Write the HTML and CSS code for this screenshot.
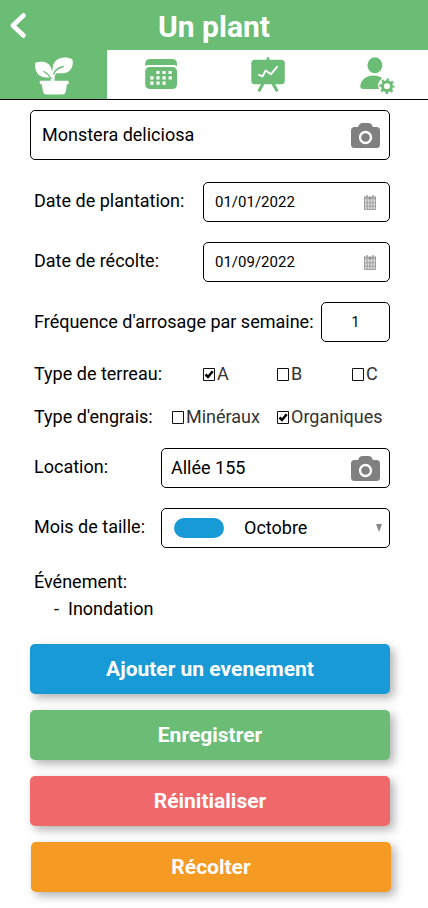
FILE: index.html
```html
<!DOCTYPE html>
<html lang="fr">
<head>
<meta charset="utf-8">
<title>Un plant</title>
<link rel="stylesheet" href="styles.css">
</head>
<body>
<svg class="defs" width="0" height="0">
  <symbol id="camera" viewBox="0 0 30 26">
    <path fill="#808080" d="M4.500 4H8L9.300 1.500Q10.200 0 12.200 0H18.800Q20.800 0 21.700 1.500L23 4H26.500Q30 4 30 7.500V21.500Q30 25 26.500 25H4.500Q1 25 1 21.500V7.500Q1 4 4.500 4Z"/>
    <circle cx="15.500" cy="14.500" r="5.500" fill="none" stroke="#fff" stroke-width="2.300"/>
  </symbol>
  <symbol id="date" viewBox="0 0 14 16">
    <path fill="#8c8c8c" d="M1 2.500H13V5.500H1Z"/>
    <path fill="#ddd" d="M1 5.500H13V15.500H1Z"/>
    <path fill="none" stroke="#999" stroke-width=".9" d="M1.500 4V15.500H12.500V4M4.200 5V15.500M7 5V15.500M9.800 5V15.500M1.500 8.800H12.500M1.500 12.200H12.500"/>
    <path stroke="#fff" stroke-width="2.800" d="M4 1V4.500M10 1V4.500"/>
    <path stroke="#858585" stroke-width="1.500" stroke-linecap="round" d="M4 1.700V4M10 1.700V4"/>
  </symbol>
  <symbol id="box" viewBox="0 0 12 13">
    <path fill="#fff" stroke="#111" d="M.5.5H11.500V12.500H.5Z"/>
  </symbol>
  <symbol id="checked" viewBox="0 0 12 13">
    <path fill="#fff" stroke="#111" d="M.5.5H11.500V12.500H.5Z"/>
    <path fill="none" stroke="#000" stroke-width="2.500" d="M2.500 6.500L5 9L9.700 3.200"/>
  </symbol>
</svg>
<header class="header">
  <svg class="back" width="20" height="30" viewBox="8 10 20 30"><path d="M23.500 15.500L12.800 25.500L23.500 35.500" fill="none" stroke="#fff" stroke-width="4.600" stroke-linecap="round" stroke-linejoin="round"/></svg>
  <h1 class="title">Un plant</h1>
</header>
<nav class="tabs">
  <a class="tab active"><svg width="40" height="40" viewBox="34 56 40 40">
    <path fill="#fff" d="M41 80.700H67.500Q68.700 80.700 68.700 82V83.200Q68.700 84.200 67.500 84.200H67L65.800 91.500Q65.300 94.500 62.300 94.500H46.500Q43.500 94.500 43 91.500L41.800 84.200H41Q39.700 84.200 39.700 83V82Q39.700 80.700 41 80.700Z"/>
    <path fill="#fff" d="M35.300 62.800C42 60.300 48.800 62 51 67.500C51.700 69 51.800 71 51.900 72C53.500 69 51.500 65 56 60.500C60 57 67 56.600 72.500 59.500C74 67 70 72.800 63.500 73.200C60.500 73.400 58 72.700 56.300 73.600C54.500 74.800 54.600 78 54.500 81H50.800C50.800 77.500 50 77.300 47.500 77.500C38.500 78.300 34 71 35.300 62.800Z"/>
    <path fill="none" stroke="#6bbd76" stroke-width="1.400" stroke-linecap="round" d="M44 71.500Q49 74.500 51 78.500M63.300 66.500Q55.500 68.500 53.700 74"/>
  </svg></a>
  <a class="tab"><svg width="34" height="32" viewBox="144 58 34 32">
    <path fill="#6bbd76" d="M145.200 65V64Q145.200 59 150.200 59H172Q177 59 177 64V66Q175.500 64.900 174 64.900H148Q146.500 64.900 145.200 66Z"/>
    <rect x="145.200" y="67" width="31.800" height="22" rx="4.500" fill="#6bbd76"/>
    <path fill="none" stroke="#fff" stroke-width="3.200" stroke-dasharray="3.200 2.900" d="M156.300 72.500H172M150.300 77.800H172M150.300 83.200H166"/>
  </svg></a>
  <a class="tab"><svg width="36" height="38" viewBox="250 56 36 38">
    <rect x="251.300" y="59.800" width="33.500" height="24.500" rx="3.500" fill="#6bbd76"/>
    <path fill="none" stroke="#6bbd76" stroke-width="3" stroke-linecap="round" d="M268 58.500V61M262.800 84L259.300 90.300M273.200 84L276.700 90.300"/>
    <path fill="none" stroke="#fff" stroke-width="1.900" stroke-linecap="round" stroke-linejoin="round" d="M259 74.800L262.500 76.300L265.700 70.500L271 74.200L277 66.800"/>
  </svg></a>
  <a class="tab user"><svg width="36" height="40" viewBox="360 56 36 40">
    <ellipse cx="374.900" cy="65.300" rx="7.500" ry="8" fill="#6bbd76"/>
    <path fill="#6bbd76" d="M363 89Q360.300 89 360.300 86C361 80 366 75.500 373.500 75.500Q379 75.500 382.300 78Q376 83.500 379 89Z"/>
    <circle cx="387" cy="86.200" r="8.200" fill="#fff"/>
    <circle cx="387" cy="86.200" r="6.400" fill="none" stroke="#6bbd76" stroke-width="2.600" stroke-dasharray="2.513 2.513" stroke-dashoffset="1.256"/>
    <circle cx="387" cy="86.200" r="4.500" fill="none" stroke="#6bbd76" stroke-width="2.900"/>
  </svg></a>
</nav>
<main class="form">
  <div class="field name"><span>Monstera deliciosa</span><svg class="camera" width="30" height="26"><use href="#camera"/></svg></div>
  <div class="row">
    <span class="label">Date de plantation:</span>
    <div class="field date"><span>01/01/2022</span><svg width="14" height="16"><use href="#date"/></svg></div>
  </div>
  <div class="row">
    <span class="label">Date de récolte:</span>
    <div class="field date"><span>01/09/2022</span><svg width="14" height="16"><use href="#date"/></svg></div>
  </div>
  <div class="row">
    <span class="label freq">Fréquence d'arrosage par semaine:</span>
    <div class="field count">1</div>
  </div>
  <div class="options soil">
    <span class="label">Type de terreau:</span>
    <span class="option"><svg width="12" height="13"><use href="#checked"/></svg>A</span>
    <span class="option"><svg width="12" height="13"><use href="#box"/></svg>B</span>
    <span class="option"><svg width="12" height="13"><use href="#box"/></svg>C</span>
  </div>
  <div class="options feed">
    <span class="label">Type d'engrais:</span>
    <span class="option"><svg width="12" height="13"><use href="#box"/></svg>Minéraux</span>
    <span class="option"><svg width="12" height="13"><use href="#checked"/></svg>Organiques</span>
  </div>
  <div class="row">
    <span class="label">Location:</span>
    <div class="field wide place"><span>Allée 155</span><svg class="camera" width="30" height="26"><use href="#camera"/></svg></div>
  </div>
  <div class="row">
    <span class="label">Mois de taille:</span>
    <div class="field wide month"><i class="pill"></i><span>Octobre</span><svg class="arrow" width="6" height="8" viewBox="0 0 6 8"><path d="M0 0H6L3 8Z" fill="#888"/></svg></div>
  </div>
  <section class="events">
    <div>Événement:</div>
    <div class="event"><span class="dash">-</span>Inondation</div>
  </section>
  <div class="buttons">
    <button class="button blue">Ajouter un evenement</button>
    <button class="button green">Enregistrer</button>
    <button class="button red">Réinitialiser</button>
    <button class="button orange">Récolter</button>
  </div>
</main>
</body>
</html>
```
FILE: styles.css
```css
* { box-sizing: border-box; }
body {
  margin: 0;
  width: 428px;
  height: 908px;
  overflow: hidden;
  background: #fff;
  color: #000;
  font: 18px/27px Roboto, sans-serif;
}
svg { display: block; flex: none; }
.defs { position: absolute; }
.header {
  display: grid;
  grid-template-columns: 28px 1fr 28px;
  align-items: center;
  height: 50px;
  background: #6bbd76;
  color: #fff;
}
.back { margin-left: 8px; }
.title {
  margin: 3px 0 0;
  font-size: 30px;
  line-height: 36px;
  font-weight: 700;
  text-align: center;
}
.tabs {
  display: grid;
  grid-template-columns: repeat(4, 107px);
  height: 50px;
  border-bottom: 1px solid #000;
}
.tab { display: flex; justify-content: center; padding-top: 6px; }
.tab:nth-child(2) { padding-top: 8px; }
.user { padding-left: 6px; }
.active { background: #6bbd76; }
.form { padding: 10px 38px 0 30px; }
.field {
  display: flex;
  align-items: center;
  justify-content: space-between;
  height: 40px;
  border: 1px solid #000;
  border-radius: 5px;
}
.name { height: 50px; margin-bottom: 22px; padding: 0 9px 0 11px; }
.name span, .place span, .month span { margin-bottom: 1px; }
.camera { margin-top: 2px; }
.row {
  display: flex;
  align-items: center;
  justify-content: space-between;
  height: 40px;
  margin-bottom: 20px;
  padding-left: 4px;
}
.label { white-space: nowrap; margin-top: -3px; }
.freq { margin-top: -1px; }
.date { width: 187px; padding: 0 12px 0 11px; font-size: 15px; }
.count { width: 69px; justify-content: center; font-size: 14px; }
.wide { width: 229px; }
.place { padding: 0 9px; }
.month { justify-content: flex-start; padding: 0 7px 0 12px; }
.pill { width: 50px; height: 20px; margin-right: 20px; border-radius: 10px; background: #189ad6; }
.arrow { margin-left: auto; }
.options { display: grid; align-items: center; height: 27px; padding-left: 4px; }
.options .label { margin: 0; }
.soil { grid-template-columns: 169px 74px 75px 1fr; margin: -2px 0 16px; }
.feed { grid-template-columns: 138px 105px 1fr; margin-bottom: 18px; }
.option { display: flex; align-items: center; gap: 2px; color: #333; white-space: nowrap; }
.option svg { margin-top: 2px; }
.events { margin: 20px 0 22px; padding-left: 4px; }
.event { display: flex; padding-left: 20px; }
.dash { width: 14px; }
.buttons { display: grid; gap: 16px; }
.button {
  height: 50px;
  padding: 0;
  border: 0;
  border-radius: 5px;
  color: #fff;
  font: 700 21px/24px Roboto, sans-serif;
  box-shadow: 4px 4px 10px rgba(0, 0, 0, .3);
}
.blue { background: #189ad6; }
.green { background: #6bbd76; }
.red { background: #ef696b; }
.orange { background: #f59a23; margin: 0 -1px 0 1px; }
```
